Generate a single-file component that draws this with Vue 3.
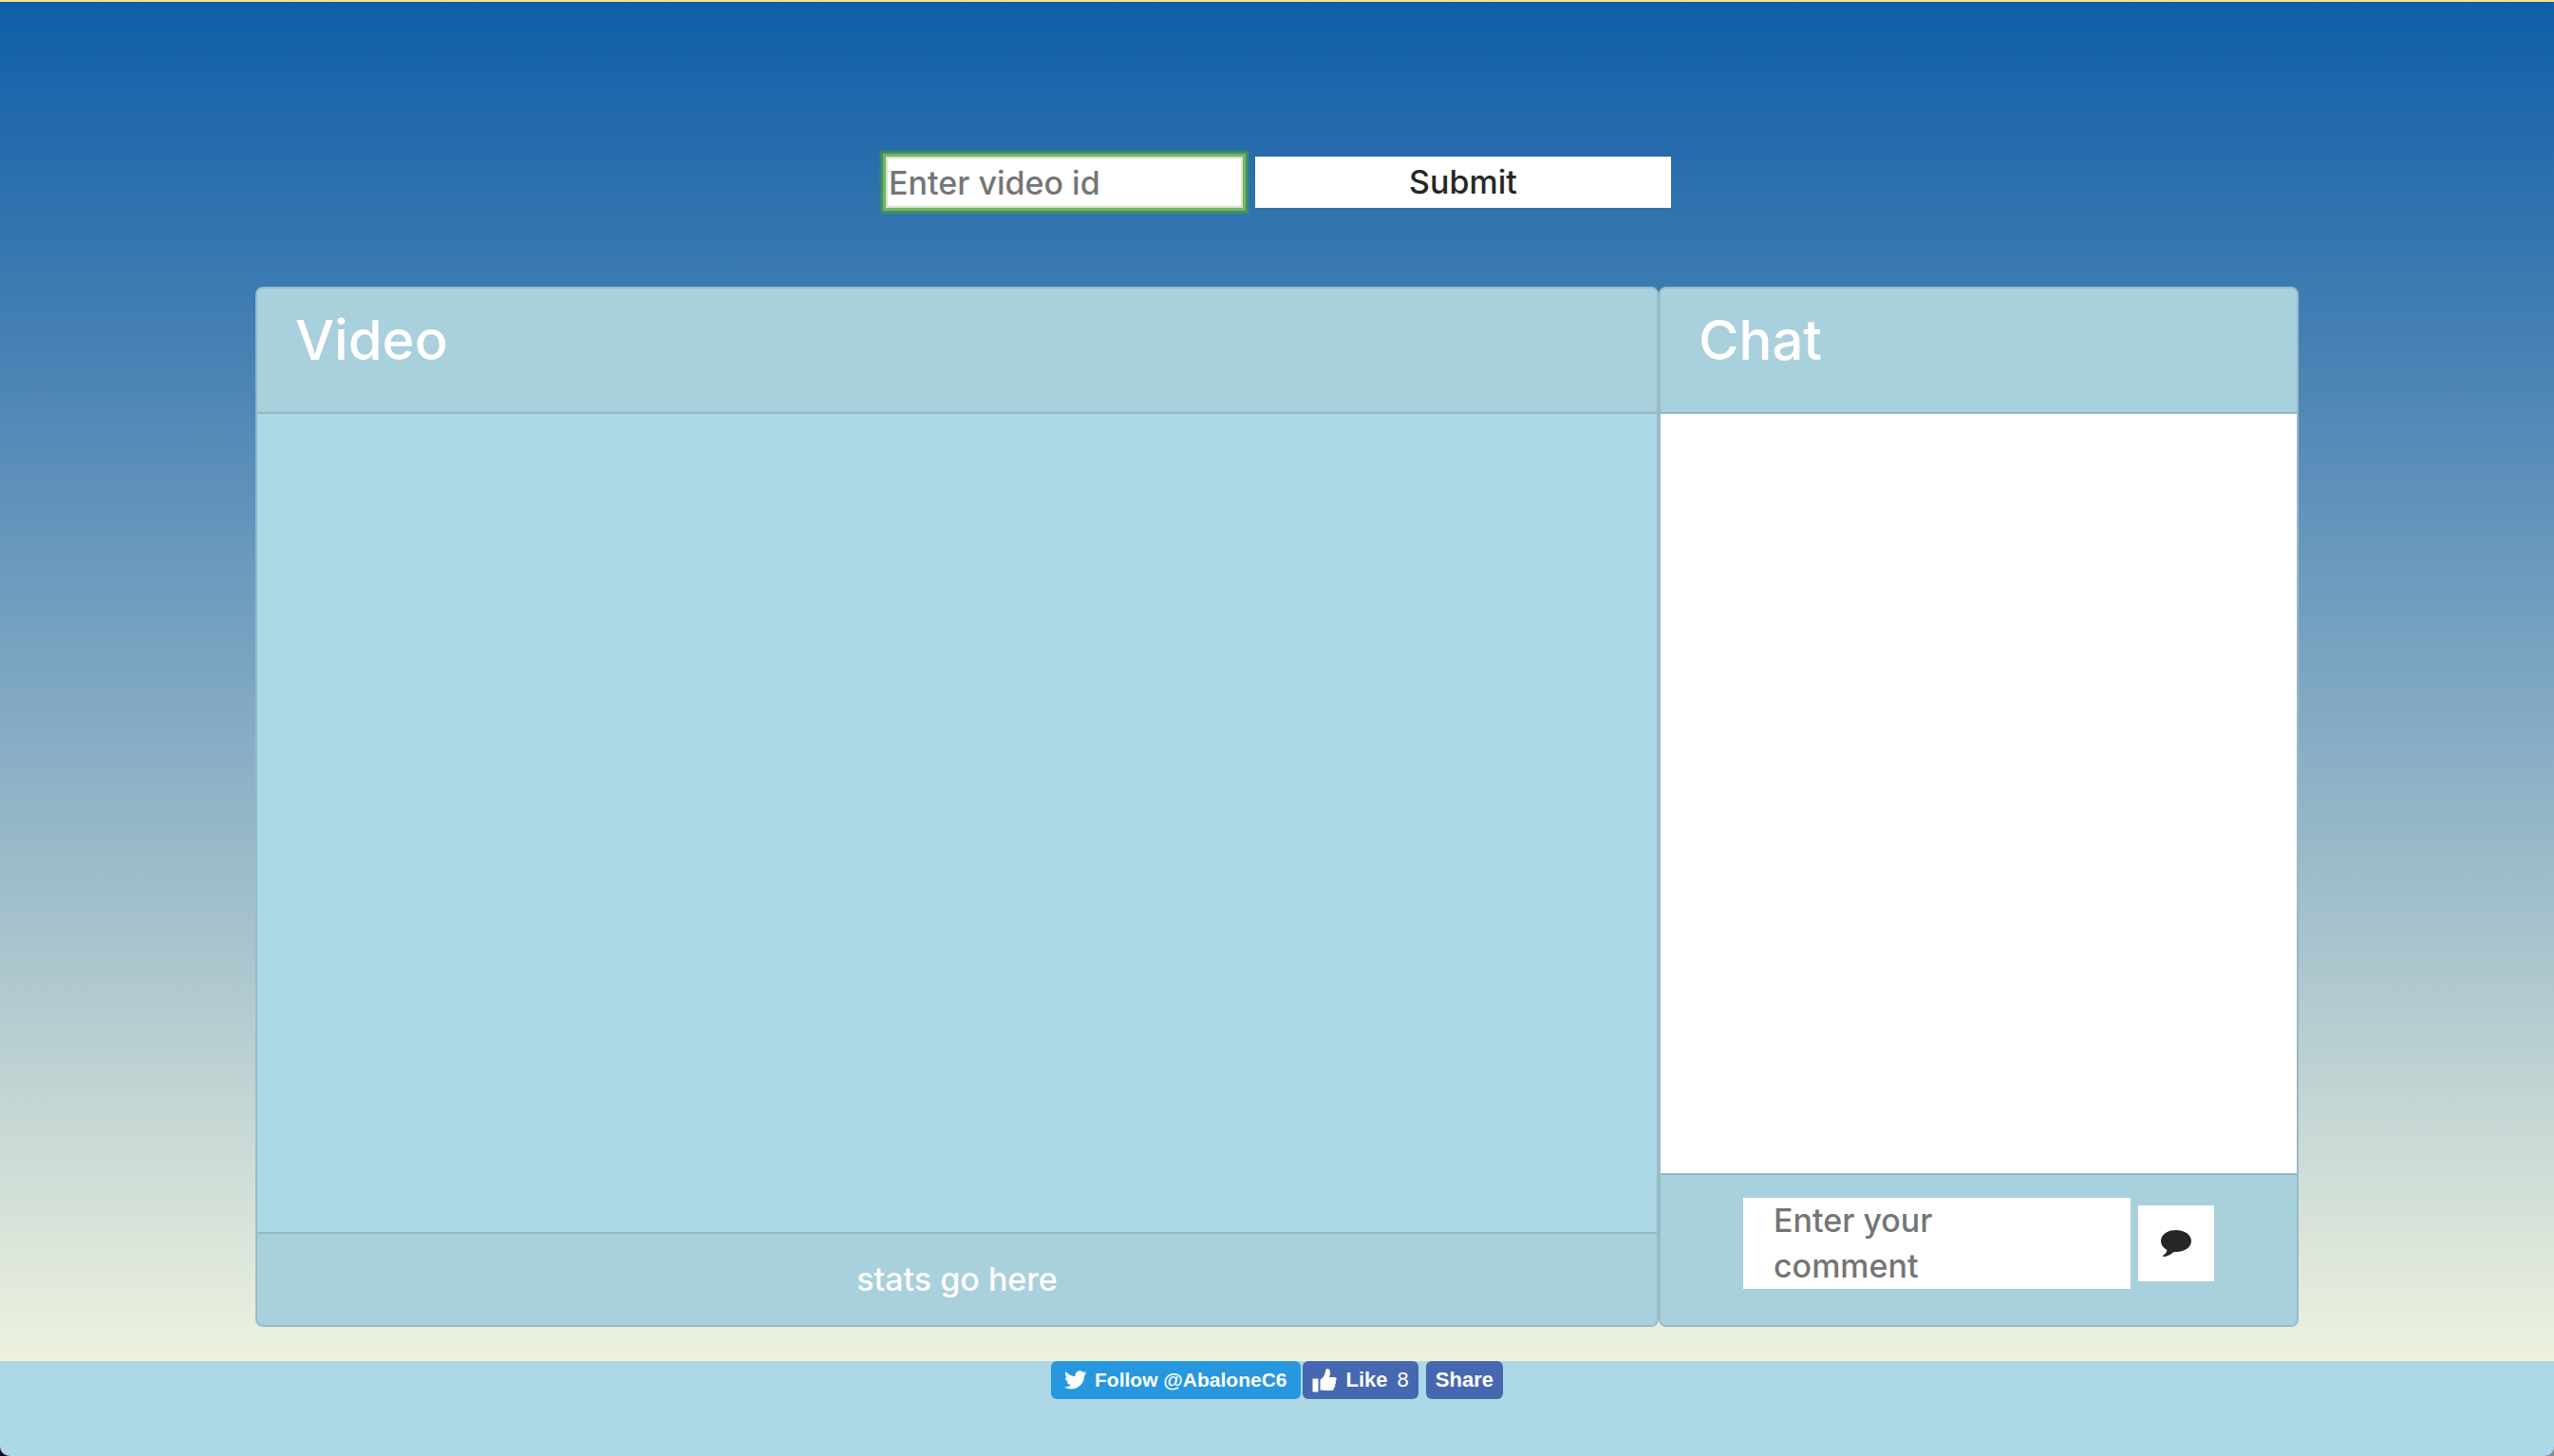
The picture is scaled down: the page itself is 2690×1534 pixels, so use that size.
<script setup>
import { ref } from 'vue'

const videoId = ref('')
const comment = ref('')
</script>

<template>
  <div class="page">
    <main class="sky">
      <form class="search" @submit.prevent>
        <input v-model="videoId" class="video-id" type="text" placeholder="Enter video id" aria-label="Video id">
        <button class="submit" type="submit">Submit</button>
      </form>
      <div class="panels">
        <section class="card video">
          <header class="card-header"><h1>Video</h1></header>
          <div class="card-body"></div>
          <footer class="card-footer stats">stats go here</footer>
        </section>
        <section class="card chat">
          <header class="card-header"><h1>Chat</h1></header>
          <div class="card-body messages"></div>
          <form class="card-footer composer" @submit.prevent>
            <textarea v-model="comment" class="comment" placeholder="Enter your comment" aria-label="Comment"></textarea>
            <button class="send" type="submit" aria-label="Send comment">
              <svg viewBox="0 0 34 28" width="34" height="28" aria-hidden="true">
                <path d="M17 0C26 0 33 5 33 11.500S26 23 17 23C16.200 23 15.400 23 14.700 22.900C11.500 25.500 7.500 27.700 4 28C3 28 2.800 27.200 3.400 26.600C5.600 25 7 23.300 7.400 20.900C3.500 18.800 1 15.400 1 11.500C1 5 8 0 17 0Z" />
              </svg>
            </button>
          </form>
        </section>
      </div>
    </main>
    <footer class="social">
      <a class="follow" href="#">
        <svg viewBox="0 0 24 20" width="24" height="20" aria-hidden="true">
          <path d="M23.600 2.400a9.700 9.700 0 0 1-2.800.8A4.800 4.800 0 0 0 23 .500a9.700 9.700 0 0 1-3.100 1.200A4.850 4.850 0 0 0 11.650 6.100 13.750 13.750 0 0 1 1.650 1a4.850 4.850 0 0 0 1.500 6.500 4.800 4.800 0 0 1-2.200-.6v.06a4.850 4.850 0 0 0 3.900 4.750 4.900 4.900 0 0 1-2.200.08 4.850 4.850 0 0 0 4.500 3.360A9.700 9.700 0 0 1 0 17.200a13.700 13.700 0 0 0 7.400 2.200c8.900 0 13.800-7.400 13.800-13.800v-.6a9.900 9.900 0 0 0 2.400-2.600z" />
        </svg>
        Follow @AbaloneC6
      </a>
      <button class="like" type="button">
        <svg viewBox="0 0 26 26" width="26" height="26" aria-hidden="true">
          <path d="M.5 11.500h6v14h-6zM8.500 12.500c3-1.500 5-5 5.500-8.500C14.200 2 14.500 1 16 1c2 0 3 2 3 4.500 0 1.500-.5 3.200-1 4.500h5.500c2.500 0 3 3 1 4 1 1 .8 3-.6 3.700.8 1.200.3 2.800-1 3.300.5 1.700-.5 3-2.400 3h-7c-2 0-3-.6-5-.6z" />
        </svg>
        <b>Like</b><span>8</span>
      </button>
      <button class="share" type="button">Share</button>
    </footer>
  </div>
</template>

<style>
body {
  margin: 0;
  background: linear-gradient(90deg, #10101c 50%, #8c8c8c 50%);
}
</style>

<style scoped>
.page {
  display: flex;
  flex-direction: column;
  min-height: 100vh;
  box-sizing: border-box;
  border-top: 2px solid #f0e68c;
  border-radius: 0 0 10px 10px;
  background: #add8e6;
  font-family: Inter, "DejaVu Sans", sans-serif;
  font-size: 34px;
  font-weight: 500;
  line-height: 48px;
}
.sky {
  display: flex;
  flex-direction: column;
  flex: 1;
  box-sizing: border-box;
  padding: 160px 10% 36px;
  background: linear-gradient(#0f5ea8, #3a79b1 20%, #eef2df);
}
.search {
  display: flex;
  justify-content: center;
  align-items: center;
  gap: 10px;
  margin-bottom: 80px;
}
input, textarea, button {
  font: inherit;
  border: 0;
  border-radius: 0;
  margin: 0;
  color: #262626;
}
::placeholder {
  color: #757575;
  opacity: 1;
}
.video-id {
  width: 382px;
  height: 60px;
  box-sizing: border-box;
  padding: 0 6px;
  background: #fff;
  outline: 0;
  box-shadow: inset 0 0 0 3px #7ab368, inset 0 0 0 5px #d2e8cb, 0 0 2px 3px #43935f;
}
.submit {
  width: 438px;
  height: 54px;
  padding: 0;
  background: #fff;
  line-height: 50px;
}
.panels {
  display: flex;
  flex: 1;
}
.card {
  display: flex;
  flex-direction: column;
  box-sizing: border-box;
  border: 2px solid #97bbc8;
  border-radius: 8px;
  background: #add8e6;
  overflow: hidden;
}
.video {
  flex: 11;
}
.chat {
  flex: 5;
}
.card-header {
  height: 132px;
  box-sizing: border-box;
  padding: 20px 40px;
  border-bottom: 2px solid #93b8c4;
  background: #a9d0dd;
}
h1 {
  margin: 0;
  color: #fff;
  font-size: 58px;
  line-height: 68px;
  font-weight: 500;
}
.card-body {
  flex: 1;
}
.messages {
  background: #fff;
}
.card-footer {
  border-top: 2px solid #93b8c4;
  background: #a9d0dd;
}
.stats {
  padding: 24px 40px;
  color: #fff;
  text-align: center;
}
.composer {
  display: flex;
  justify-content: center;
  align-items: center;
  gap: 8px;
  padding: 24px 40px 38px;
}
.comment {
  display: block;
  width: 408px;
  height: 96px;
  box-sizing: border-box;
  padding: 0 120px 0 32px;
  background: #fff;
  resize: none;
  overflow: hidden;
}
.send {
  display: flex;
  justify-content: center;
  align-items: center;
  width: 80px;
  height: 80px;
  padding: 0;
  background: #fff;
}
svg {
  flex: none;
  fill: currentColor;
}
.social {
  display: flex;
  justify-content: center;
  align-items: flex-start;
  height: 100px;
  font-family: "Liberation Sans", Arial, sans-serif;
  font-size: 22px;
  font-weight: 400;
  line-height: 40px;
}
.follow, .like, .share {
  display: flex;
  align-items: center;
  box-sizing: border-box;
  height: 40px;
  border-radius: 6px;
  color: #fff;
  text-decoration: none;
}
.follow {
  gap: 8px;
  padding: 0 14px;
  margin-right: 2px;
  background: #2797df;
  font-size: 21px;
  font-weight: 700;
}
.like {
  gap: 10px;
  padding: 0 10px;
  margin-right: 8px;
  background: #4568b0;
}
.share {
  padding: 0 10px;
  background: #4568b0;
  font-weight: 700;
}
</style>
